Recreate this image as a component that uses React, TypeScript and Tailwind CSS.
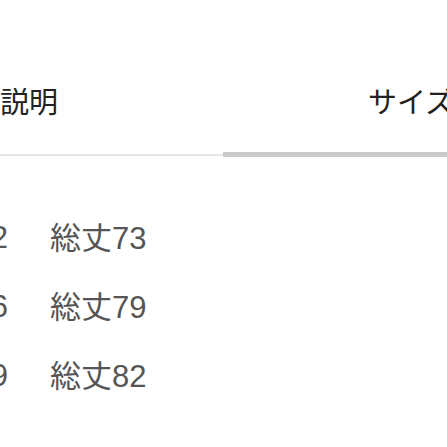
const rows = [
  { left: "52", label: "総丈", value: "73" },
  { left: "56", label: "総丈", value: "79" },
  { left: "59", label: "総丈", value: "82" },
]

const cjk = { fontFamily: '"Noto Sans CJK JP", "Noto Sans", sans-serif' }
const latin = { fontFamily: '"Liberation Sans", Arial, sans-serif' }

export default function App() {
  return (
    <div className="w-[447px] h-[447px] overflow-hidden bg-white" style={cjk}>
      <div className="flex pt-[85px] text-[29px] leading-[30px] text-[#222]">
        <div className="w-[223px] flex justify-end pr-[165px] whitespace-nowrap">
          <span>商品説明</span>
        </div>
        <div className="flex-1 pl-[145px] whitespace-nowrap">
          <span>サイズ</span>
        </div>
      </div>
      <div className="flex items-end mt-[37px]">
        <div className="w-[223px] h-[2px] bg-[#e6e6e6]" />
        <div className="flex-1 h-[5px] bg-[#c9c9c9] mb-[-1px]" />
      </div>
      <div className="flex flex-col gap-[36px] pt-[65px] text-[31px] leading-[30px] text-[#555]">
        {rows.map((r) => (
          <div key={r.value} className="flex items-center">
            <div className="w-[8px] flex justify-end whitespace-nowrap">
              <span>身幅</span>
              <span style={latin}>{r.left}</span>
            </div>
            <div className="pl-[42px] whitespace-nowrap">
              <span>{r.label}</span>
              <span style={latin}>{r.value}</span>
            </div>
          </div>
        ))}
      </div>
    </div>
  )
}
